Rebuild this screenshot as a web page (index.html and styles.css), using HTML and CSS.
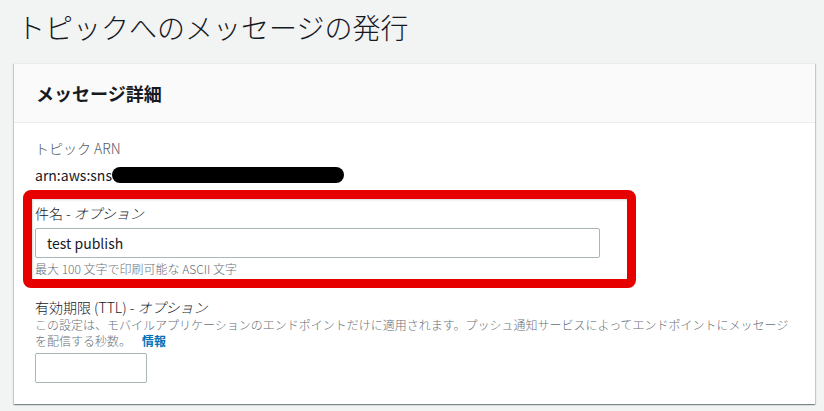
FILE: index.html
```html
<!DOCTYPE html>
<html lang="ja">
<head>
<meta charset="utf-8">
<title>トピックへのメッセージの発行</title>
<link rel="stylesheet" href="styles.css">
</head>
<body>
<div class="page">
  <h1 class="page-title">トピックへのメッセージの発行</h1>
  <section class="card">
    <header class="card-header">
      <h2 class="card-title">メッセージ詳細</h2>
    </header>
    <div class="card-body">
      <div class="field-arn">
        <div class="label-muted">トピック ARN</div>
        <div class="arn-value">arn:aws:sns<span class="redact"></span></div>
      </div>
      <div class="highlight">
        <div class="label">件名 - <span class="opt">オプション</span></div>
        <div class="input input-wide">test publish</div>
        <div class="help">最大 100 文字で印刷可能な ASCII 文字</div>
      </div>
      <div class="field-ttl">
        <div class="label label-tight">有効期限 (TTL) - <span class="opt">オプション</span></div>
        <div class="desc">この設定は、モバイルアプリケーションのエンドポイントだけに適用されます。プッシュ通知サービスによってエンドポイントにメッセージを配信する秒数。<a class="info" href="#">情報</a></div>
        <div class="input input-small"></div>
      </div>
    </div>
  </section>
</div>
</body>
</html>
```
FILE: styles.css
```css
html, body {
  margin: 0;
  padding: 0;
  background: #f2f3f3;
}
body {
  font-family: "Noto Sans CJK JP", "Noto Sans", sans-serif;
  color: #16191f;
  width: 824px;
  height: 411px;
  overflow: hidden;
}
.page {
  padding: 9px 9px 0 14px;
}
.page-title {
  margin: 0 0 18px 3px;
  font-size: 28px;
  line-height: 36px;
  font-weight: 300;
  color: #16191f;
}
.card {
  background: #fff;
  border-top: 1px solid #eaeded;
  box-shadow: 0 1px 1px 0 rgba(0,28,36,.3), 1px 1px 1px 0 rgba(0,28,36,.15), -1px 1px 1px 0 rgba(0,28,36,.15);
}
.card-header {
  background: #fafafa;
  border-bottom: 1px solid #eaeded;
  height: 58px;
  display: flex;
  align-items: center;
  padding-left: 22px;
}
.card-title {
  margin: 0;
  font-size: 18px;
  line-height: 24px;
  font-weight: 700;
  color: #16191f;
}
.card-body {
  padding: 14px 20px 21px 21px;
}
.label-muted {
  font-size: 14px;
  line-height: 22px;
  font-weight: 300;
  color: #545b64;
}
.arn-value {
  margin-top: 5px;
  font-size: 14px;
  line-height: 22px;
  font-weight: 400;
  color: #16191f;
  display: flex;
  align-items: center;
}
.redact {
  display: inline-block;
  width: 232px;
  height: 16px;
  background: #000;
  border-radius: 8px;
}
.highlight {
  margin: 4px 0 0 -12px;
  width: 592px;
  border: 9px solid #e60000;
  border-radius: 8px;
  padding: 3px 0 2px 3px;
  box-shadow: inset 1px 1px 2px rgba(0,0,0,.15);
}
.label {
  font-size: 14px;
  line-height: 22px;
  font-weight: 300;
  color: #16191f;
}
.opt {
  font-style: oblique;
}
.label-tight {
  line-height: 20px;
}
.input {
  box-sizing: border-box;
  height: 30px;
  border: 1px solid #aab7b8;
  border-radius: 2px;
  background: #fff;
  font-size: 14px;
  line-height: 28px;
  padding-left: 11px;
  color: #16191f;
}
.input-wide {
  width: 565px;
  margin-top: 4px;
}
.input-small {
  width: 112px;
  margin-top: 4px;
}
.help {
  margin-top: 3px;
  font-size: 12px;
  line-height: 16px;
  font-weight: 300;
  color: #687078;
}
.field-ttl {
  margin-top: 9px;
}
.desc {
  font-size: 12px;
  line-height: 16px;
  font-weight: 300;
  color: #687078;
}
.info {
  color: #0073bb;
  font-weight: 700;
  text-decoration: none;
  margin-left: 11px;
}
```
